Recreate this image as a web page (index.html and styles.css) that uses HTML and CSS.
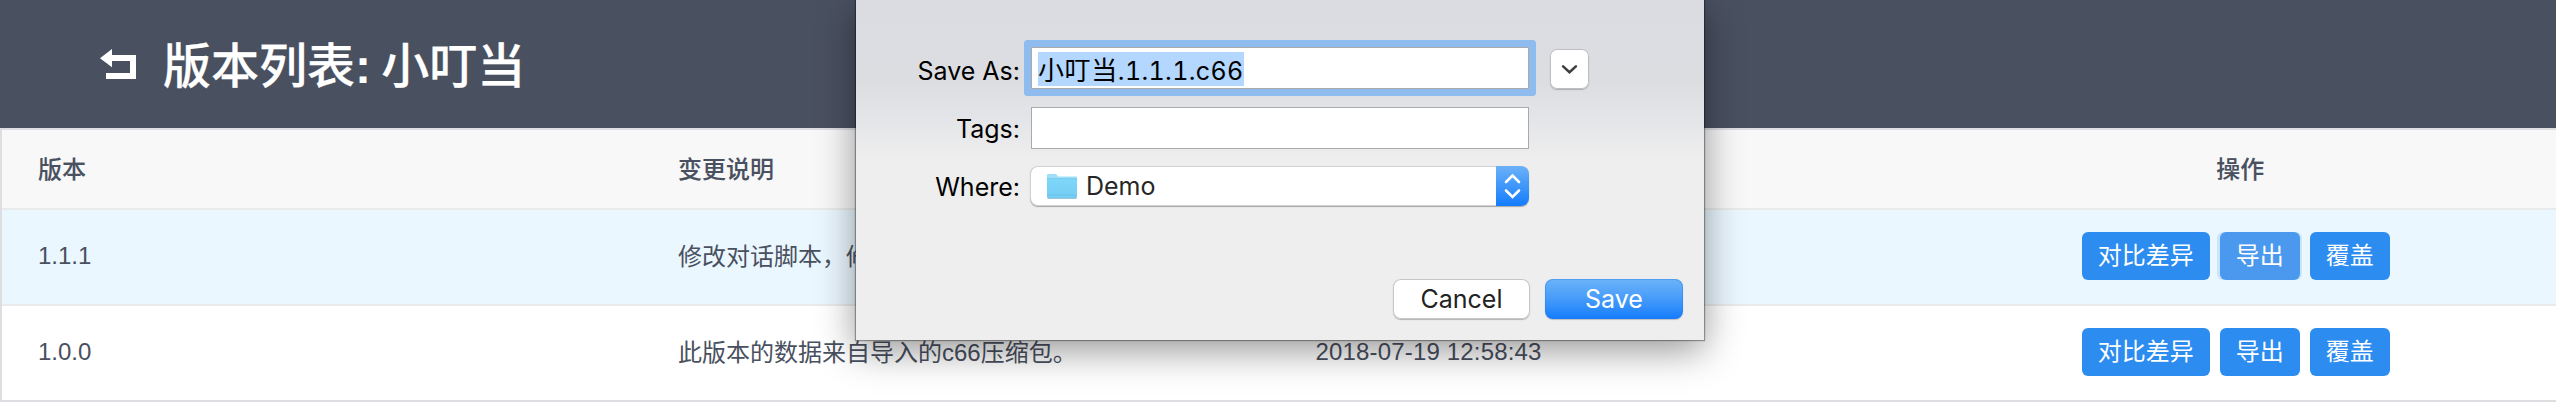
FILE: index.html
```html
<!DOCTYPE html>
<html lang="zh-CN">
<head>
<meta charset="utf-8">
<title>版本列表</title>
<link rel="stylesheet" href="styles.css">
</head>
<body>
<header class="topbar">
  <svg class="back" width="36" height="30" viewBox="0 0 36 30"><path d="M0 9.2 12 0V6H36V30H6V24H30V12H12V18.2Z" fill="#fff"/></svg>
  <h1 class="title">版本列表<span class="colon">: </span>小叮当</h1>
</header>
<main class="table">
  <div class="row head"><div class="cell">版本</div><div class="cell">变更说明</div><div class="cell"></div><div class="cell ops">操作</div></div>
  <div class="row active"><div class="cell">1.1.1</div><div class="cell note">修改对话脚本，修</div><div class="cell"></div>
    <div class="cell ops"><div class="btns"><button class="btn">对比差异</button><button class="btn focus">导出</button><button class="btn">覆盖</button></div></div></div>
  <div class="row"><div class="cell">1.0.0</div><div class="cell note">此版本的数据来自导入的c66压缩包。</div><div class="cell date">2018-07-19 12:58:43</div>
    <div class="cell ops"><div class="btns"><button class="btn">对比差异</button><button class="btn">导出</button><button class="btn">覆盖</button></div></div></div>
</main>
<section class="sheet">
  <div class="field name-field">
    <span class="label low">Save As:</span>
    <div class="input focused"><span class="selected">小叮当<span class="latin">.1.1.1.c66</span></span></div>
    <div class="expand"><svg width="40" height="40" viewBox="0 0 40 40"><path d="M13.1 17.4 19.5 23.2 25.9 17.4" fill="none" stroke="#3f3f41" stroke-width="2.6" stroke-linecap="round" stroke-linejoin="miter"/></svg></div>
  </div>
  <div class="field tags-field">
    <span class="label">Tags:</span>
    <div class="input"></div>
  </div>
  <div class="field where-field">
    <span class="label">Where:</span>
    <div class="popup">
      <svg class="folder" width="32" height="28" viewBox="0 0 32 28">
        <defs><linearGradient id="f" x1="0" y1="0" x2="0" y2="1"><stop offset="0" stop-color="#7ed6f9"/><stop offset="1" stop-color="#74cdf4"/></linearGradient></defs>
        <path d="M1 3Q1 2 2 2H9.5Q10.4 2 11 3L12 4.4H30Q31 4.4 31 5.4V25Q31 26 30 26H2Q1 26 1 25Z" fill="#9fdffa"/>
        <path d="M1 7H31V24.6Q31 25.6 30 25.6H2Q1 25.6 1 24.6Z" fill="url(#f)"/>
        <path d="M1 6.6H31M1 23H31" stroke="#69c2e8" stroke-width=".7"/>
        <path d="M1.5 26.2H30.5" stroke="#5aa7c8" stroke-width=".9"/>
      </svg>
      <span class="folder-name">Demo</span>
      <span class="stepper"><svg width="33" height="40" viewBox="0 0 33 40"><path d="M10 16 16.5 9.5 23 16M10 24.5 16.5 31 23 24.5" fill="none" stroke="#fff" stroke-width="2.6" stroke-linecap="round"/></svg></span>
    </div>
  </div>
  <div class="actions"><button class="mac cancel">Cancel</button><button class="mac save">Save</button></div>
</section>
</body>
</html>
```
FILE: styles.css
```css
* { box-sizing: border-box; }
body {
  margin: 0;
  height: 408px;
  overflow: hidden;
  background: #fff;
  color: #495060;
  font: 24px "Liberation Sans", "Noto Sans CJK SC", sans-serif;
}
button { border: 0; margin: 0; font: inherit; }
.topbar {
  height: 128px;
  padding-left: 100px;
  display: flex;
  align-items: center;
  gap: 27px;
  background: #495060;
}
.title {
  margin: 0;
  padding-top: 5px;
  color: #fff;
  font-size: 48px;
  font-weight: 500;
  line-height: 60px;
  white-space: pre;
  -webkit-text-stroke: .25px #fff;
}
.colon { font-weight: 700; letter-spacing: -1.5px; -webkit-text-stroke: 0; }
.table {
  border: solid #dcdee2;
  border-width: 2px 0 2px 2px;
}
.row {
  display: grid;
  grid-template-columns: 640px 637.5px 638px 1fr;
  height: 96px;
  border-bottom: 2px solid #e8eaec;
  background: #fff;
}
.row:last-child { height: 94px; border-bottom: 0; }
.head { height: 80px; background: #f8f8f9; font-weight: 500; -webkit-text-stroke: .1px #495060; }
.active { background: #ebf7ff; }
.cell {
  display: flex;
  align-items: center;
  padding: 0 36px 3px;
  white-space: nowrap;
  overflow: hidden;
}
.note { padding-bottom: 5px; }
.date { letter-spacing: .17px; }
.ops { justify-content: center; padding: 0 28px 2px 36px; }
.head .ops { padding-right: 29px; padding-bottom: 3px; }
.btns { display: flex; gap: 10px; margin-right: 10px; }
.btn {
  height: 48px;
  padding: 0 16px;
  border-radius: 6px;
  background: #2d8cf0;
  color: #fff;
  line-height: 48px;
}
.focus { background: #4b98ef; box-shadow: -3px 0 0 #cbe4fb, 2px 0 0 #cbe4fb; }

.sheet {
  position: absolute;
  left: 856px;
  top: 0;
  width: 848px;
  height: 340px;
  padding-top: 47px;
  background: linear-gradient(#dadce1 0, #dcdde1 80px, #e4e5e8 120px, #eee 160px);
  box-shadow: 0 0 1px 1px rgba(0,0,0,.35), 0 10px 36px rgba(0,0,0,.42);
  color: #000;
  font: 25px Inter, "Noto Sans CJK SC", sans-serif;
}
.field { display: flex; height: 42px; }
.tags-field { margin-top: 18px; }
.where-field { margin-top: 17px; height: 40px; }
.label {
  width: 164px;
  margin-right: 11px;
  text-align: right;
  line-height: 44px;
}
.low { line-height: 48px; }
.where-field .label { line-height: 42px; }
.input {
  width: 498px;
  height: 42px;
  padding: 4px 6px;
  border: 1px solid #a9aaac;
  background: #fff;
}
.focused { box-shadow: 0 0 0 7px #8fbcee; border-radius: 1px; }
.selected {
  display: block;
  width: 206px;
  height: 34px;
  background: #b3d7ff;
  font-size: 26px;
  line-height: 38px;
  letter-spacing: .6px;
  white-space: nowrap;
}
.latin { font-size: 25px; letter-spacing: .35px; font-variant-numeric: tabular-nums; }
.expand {
  width: 39px;
  height: 40px;
  margin: 2px 0 0 21px;
  border-radius: 7px;
  background: #fff;
  box-shadow: inset 0 0 0 1px #bdbec1, 0 1px 1px rgba(0,0,0,.22);
}
.expand svg, .stepper svg { display: block; }
.popup {
  display: flex;
  align-items: center;
  width: 499px;
  height: 40px;
  margin-left: -1px;
  padding-left: 16px;
  border-radius: 8px;
  overflow: hidden;
  background: #fff;
  box-shadow: inset 0 0 0 1px rgba(0,0,0,.18), 0 1px 1px rgba(0,0,0,.3);
}
.folder-name { margin-left: 8px; line-height: 42px; color: #262626; }
.stepper {
  width: 33px;
  height: 40px;
  margin-left: auto;
  background: linear-gradient(#6cb1f8, #3f97f9 50%, #157cfd);
}
.actions {
  display: flex;
  justify-content: flex-end;
  gap: 15px;
  margin: 73px 21px 0 0;
}
.mac {
  width: 138px;
  height: 40px;
  padding: 0;
  border-radius: 8px;
  line-height: 40px;
  font-size: 25px;
}
.cancel {
  width: 137px;
  background: #fff;
  color: #222;
  box-shadow: inset 0 0 0 1px #c6c6c6, 0 1px 1px rgba(0,0,0,.25);
}
.save {
  background: linear-gradient(#6cb3f9, #469bf9 50%, #157cfd);
  color: #fff;
  box-shadow: inset 0 0 0 1px rgba(30,120,240,.35), 0 1px 1px rgba(0,0,0,.2);
}
```
